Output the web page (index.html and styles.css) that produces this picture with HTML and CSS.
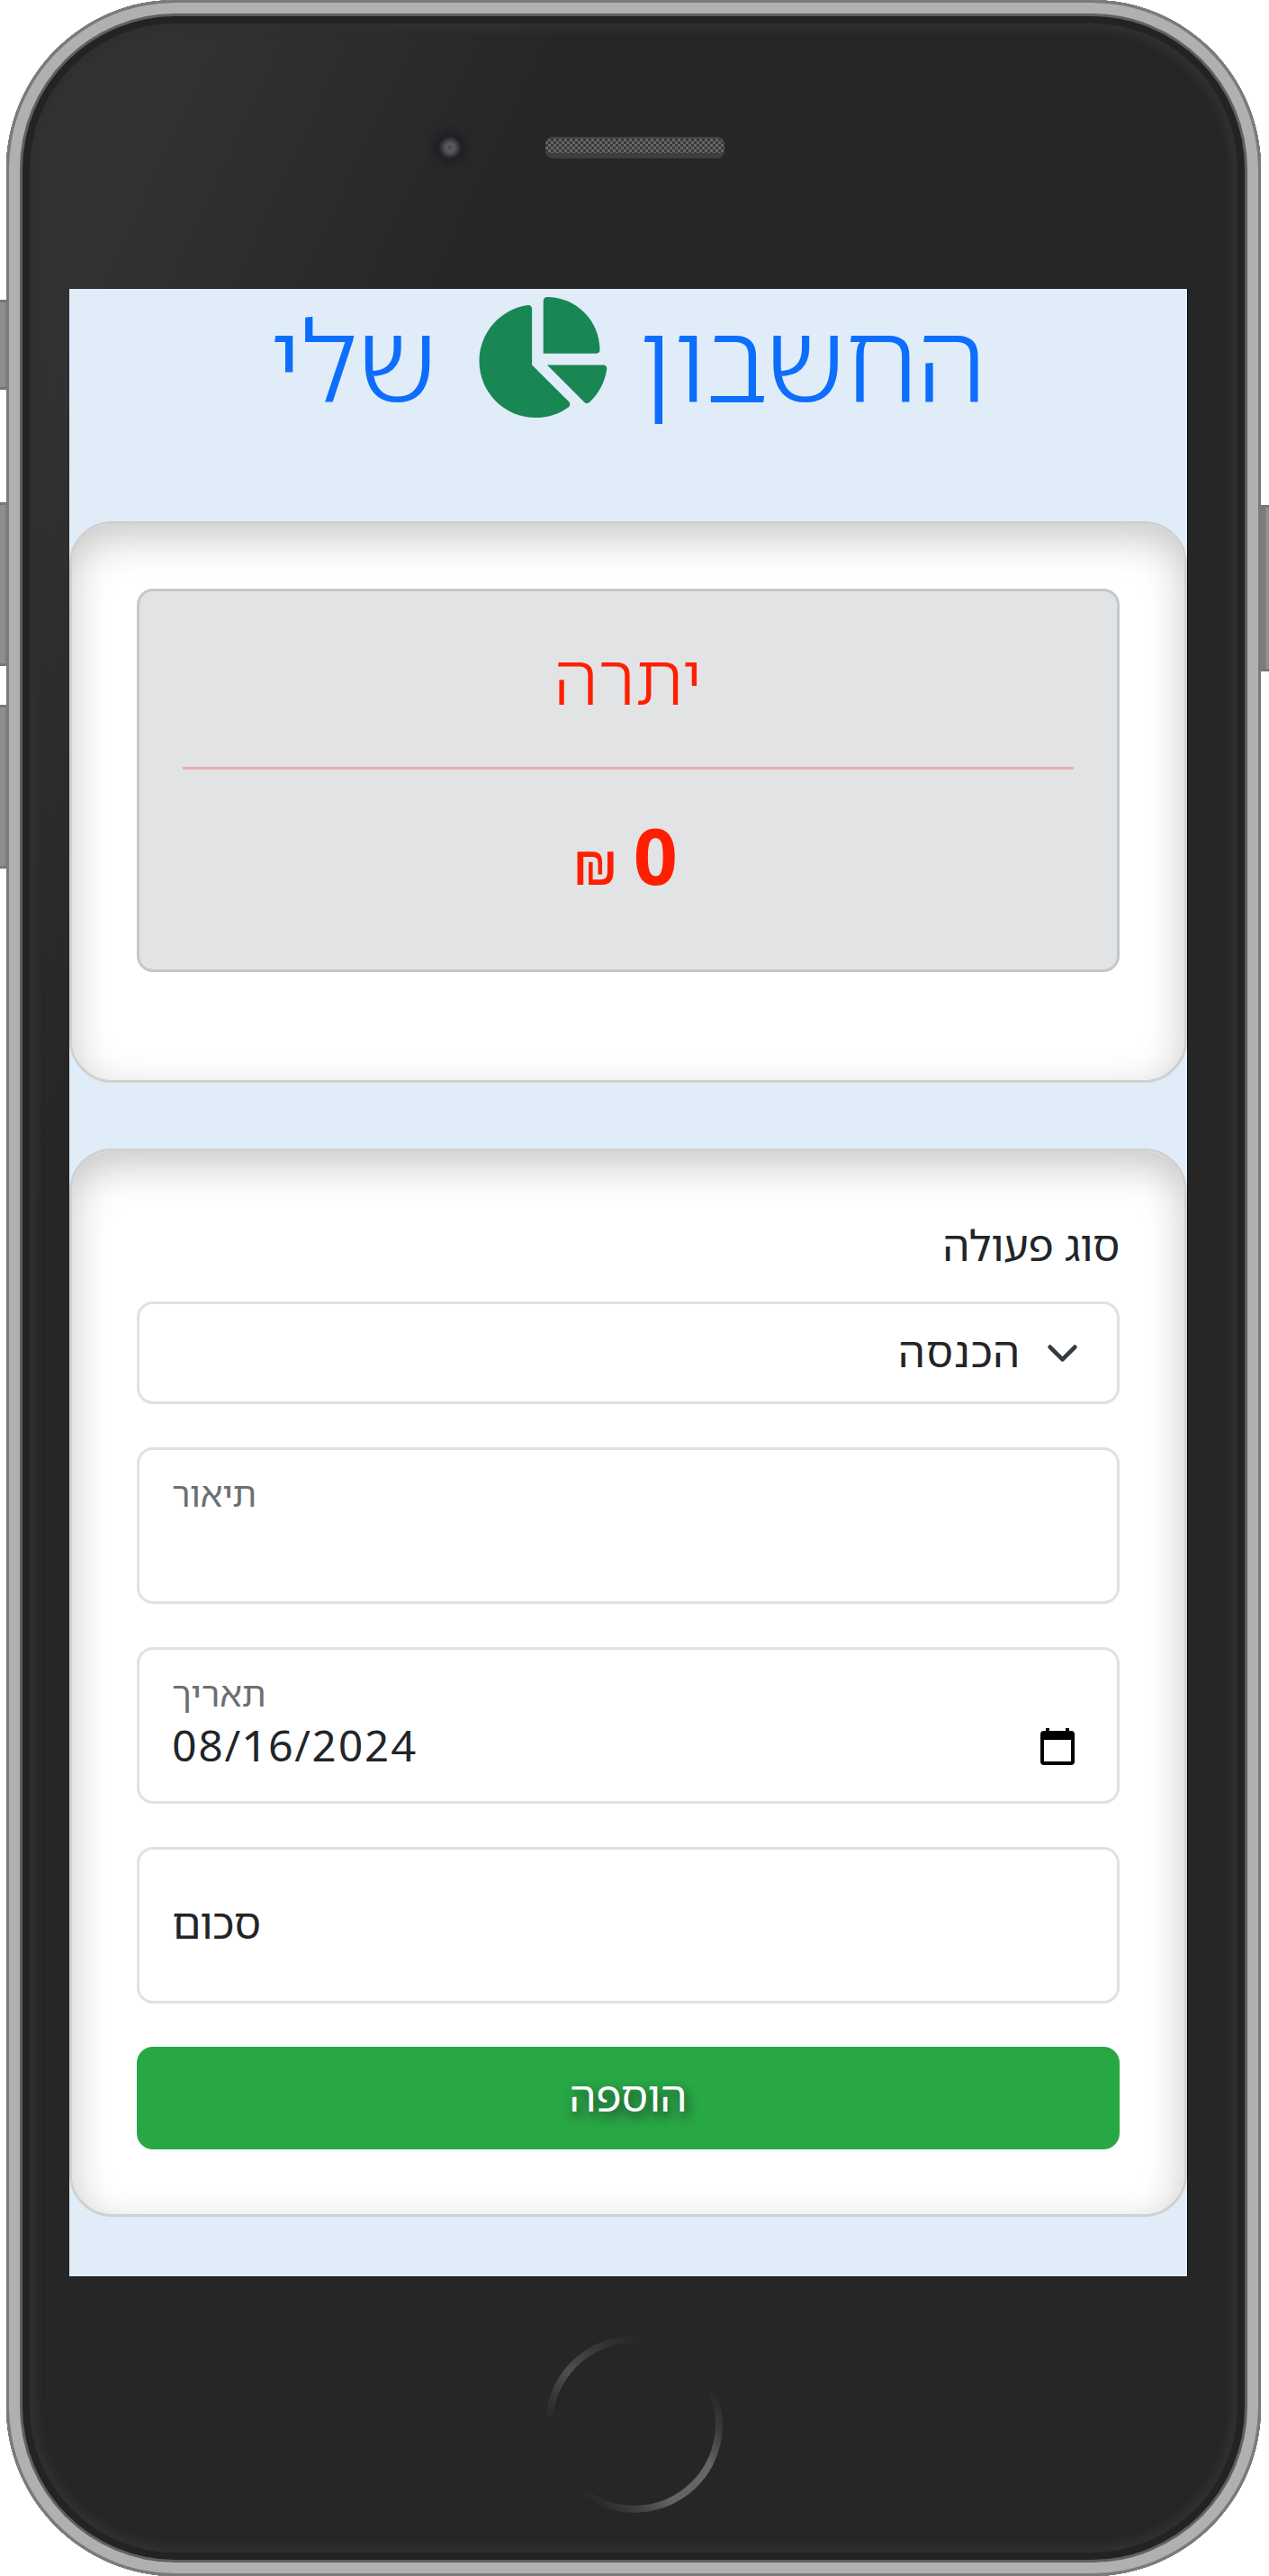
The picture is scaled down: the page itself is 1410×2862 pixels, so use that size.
FILE: index.html
```html
<!DOCTYPE html>
<html lang="he">
<head>
<meta charset="utf-8">
<title>החשבון שלי</title>
<link rel="stylesheet" href="styles.css">
</head>
<body>
<div class="stage">
  <span class="side-key mute"></span>
  <span class="side-key vol-up"></span>
  <span class="side-key vol-down"></span>
  <span class="side-key power"></span>
  <div class="phone">
    <div class="forehead"><span class="camera"></span><span class="speaker"></span></div>
    <main class="screen">
      <h1 class="brand" dir="rtl">
        <span class="word-first">החשבון</span>
        <svg class="pie" viewBox="0 0 576 512"><path fill="currentColor" d="M304 240V16.6c0-9 7-16.6 16-16.6C443.7 0 544 100.3 544 224c0 9-7.6 16-16.6 16H304zM32 272C32 150.7 122.1 50.3 239 34.3c9.2-1.3 17 6.1 17 15.4V288L412.5 444.5c6.7 6.7 6.2 17.7-1.5 23.1C371.8 495.6 323.8 512 272 512C139.5 512 32 404.6 32 272zm526.4 16c9.3 0 16.6 7.8 15.4 17c-7.7 55.9-34.6 105.6-73.9 142.3c-6 5.6-15.4 5.2-21.2-.7L320 288H558.4z"/></svg>
        <span class="word-second">שלי</span>
      </h1>
      <section class="card balance-card">
        <div class="balance">
          <div class="balance-title">יתרה</div>
          <div class="balance-value"><span class="shekel">₪</span><strong class="amount">0</strong></div>
        </div>
      </section>
      <section class="card form-card">
        <div class="form-label" dir="rtl">סוג פעולה</div>
        <div class="select" dir="rtl">
          <svg class="chevron" viewBox="0 0 16 16"><path fill="none" stroke="#343a40" stroke-linecap="round" stroke-linejoin="round" stroke-width="2" d="m2 5 6 6 6-6"/></svg>
          <span class="select-text">הכנסה</span>
        </div>
        <div class="field"><span class="field-label desc">תיאור</span></div>
        <div class="field">
          <span class="field-label when">תאריך</span>
          <div class="date-row"><span class="date">08/16/2024</span>
            <svg class="calendar" viewBox="0 0 38 41"><path fill-rule="evenodd" d="M6 0h4v3h18V0h4v3h2q4 0 4 4v30q0 4-4 4H4q-4 0-4-4V7q0-4 4-4h2zM4 13v24h30V13z"/></svg>
          </div>
        </div>
        <div class="field sum"><span class="sum-label">סכום</span></div>
        <div class="submit">הוספה</div>
      </section>
    </main>
    <svg class="home" viewBox="0 0 200 200">
      <defs>
        <linearGradient id="lit" x1="0" y1="1" x2="1" y2="0"><stop offset=".05" stop-color="#555" stop-opacity="0"/><stop offset=".35" stop-color="#636363"/><stop offset=".65" stop-color="#666"/><stop offset="1" stop-color="#444" stop-opacity="0"/></linearGradient>
        <linearGradient id="dim" x1="0" y1="1" x2="1" y2="0"><stop offset="0" stop-color="#484848" stop-opacity="0"/><stop offset=".4" stop-color="#505050"/><stop offset="1" stop-color="#404040" stop-opacity="0"/></linearGradient>
      </defs>
      <path d="M5 96A95 95 0 0 1 114 6" fill="none" stroke="url(#dim)" stroke-width="8"/>
      <path d="M45 176A94 94 0 0 0 186 62" fill="none" stroke="url(#lit)" stroke-width="8"/>
    </svg>
  </div>
</div>
</body>
</html>
```
FILE: styles.css
```css
* { box-sizing: border-box; }
body {
  margin: 0;
  background: #fff;
  color: #212529;
  font-family: "Noto Sans Hebrew", "Open Sans", "Noto Sans", sans-serif;
}
.stage { position: relative; width: 1410px; height: 2862px; overflow: hidden; padding: 0 9px 0 7px; }
.side-key { position: absolute; left: 0; width: 9px; background: linear-gradient(90deg, #8e8e8e 5px, #707070); border-top: 3px solid #777; border-bottom: 3px solid #777; }
.mute { top: 333px; height: 100px; }
.vol-up { top: 558px; height: 182px; }
.vol-down { top: 783px; height: 182px; }
.power { top: 561px; left: 1401px; height: 185px; background: linear-gradient(90deg, #7c7c7c 5px, #919191 6px); }
.phone {
  position: relative;
  display: flex;
  flex-direction: column;
  width: 1394px;
  height: 2862px;
  padding-left: 70px;
  border-radius: 188px;
  background: linear-gradient(115deg, #343434 0, #323232 8%, #262626 24%, #262626 100%);
  box-shadow: inset 0 0 0 3px #7a7a7a, inset 0 0 0 15px #b0b0b0, inset 0 0 0 18px #606060, inset 0 0 0 26px #232323, inset 0 0 8px 34px #303030;
}
.forehead { display: flex; height: 321px; padding: 152px 0 0 411px; }
.camera { width: 24px; height: 24px; margin-right: 94px; border-radius: 50%; background: radial-gradient(circle at 50% 50%, #444 0, #5c5c62 4px, #43434a 8px, #29292f 11px); box-shadow: 0 0 8px 6px #1f1f25; }
.speaker { width: 199px; height: 24px; border-radius: 8px; border-top: 2px solid #444; border-bottom: 6px solid #3e3e3e; background: repeating-conic-gradient(#666 0 25%, #3a3a3a 0 50%) 0 0 / 6px 6px; }
.screen { flex: none; width: 1242px; height: 2208px; background: #e0ecf8; box-shadow: 1px 0 #000; }
.brand { display: flex; align-items: center; justify-content: center; height: 152px; margin: 0 0 106px; font-size: 125px; font-weight: 300; line-height: 152px; color: #0d6efd; white-space: nowrap; }
.word-first { padding-top: 3px; letter-spacing: -.6px; }
.word-second { padding-top: 3px; letter-spacing: -.6px; }
.pie { flex: none; width: 151px; height: 134px; margin: 0 35px 0 39px; color: #198754; }
.card { width: 1242px; padding: 72px; background: #fff; border: 3px solid #d0d0d0; border-radius: 48px; box-shadow: inset 0 15px 45px rgba(0, 0, 0, .22); }
.balance-card { height: 624px; margin-bottom: 73px; }
.form-card { height: 1187px; }
.balance { height: 426px; padding: 0 48px; border: 3px solid #c4c8cb; border-radius: 18px; background: #e2e3e5; color: #ff1e00; text-align: center; }
.balance-title { height: 198px; border-bottom: 3px solid #ebabb1; font-size: 80px; font-weight: 300; line-height: 190px; }
.balance-value { display: flex; align-items: baseline; justify-content: center; gap: 17px; padding: 37px 6px 0 0; line-height: 116px; }
.shekel { font-size: 61px; font-weight: 500; }
.amount { font-size: 86px; font-weight: 700; }
.form-label { height: 64px; margin-bottom: 31px; font-size: 47px; line-height: 64px; letter-spacing: -.3px; }
.select { display: flex; align-items: center; height: 114px; padding-right: 42px; margin-bottom: 48px; border: 3px solid #dee2e6; border-radius: 18px; }
.chevron { width: 37px; height: 37px; margin-left: 28px; }
.select-text { font-size: 47px; line-height: 64px; letter-spacing: .9px; padding-bottom: 4px; }
.field { height: 174px; padding: 24px 33px 24px 36px; margin-bottom: 48px; border: 3px solid #dee2e6; border-radius: 18px; }
.field-label { display: block; font-size: 39px; line-height: 48px; color: #6c6f72; }
.date-row { display: flex; align-items: center; justify-content: space-between; height: 67px; padding-right: 14px; }
.date { font-size: 48px; line-height: 65px; letter-spacing: 1.6px; }
.calendar { width: 38px; height: 41px; margin-top: 3px; }
.sum { display: flex; align-items: center; padding-top: 18px; }
.sum-label { font-size: 47px; line-height: 64px; letter-spacing: -.4px; }
.submit { height: 114px; border-radius: 18px; background: #28a745; color: #fff; font-size: 47px; line-height: 109px; text-align: center; text-shadow: 3px 6px 12px rgba(33, 37, 41, .85); }
.home { width: 200px; height: 200px; margin: 65px 0 0 528px; }
```
